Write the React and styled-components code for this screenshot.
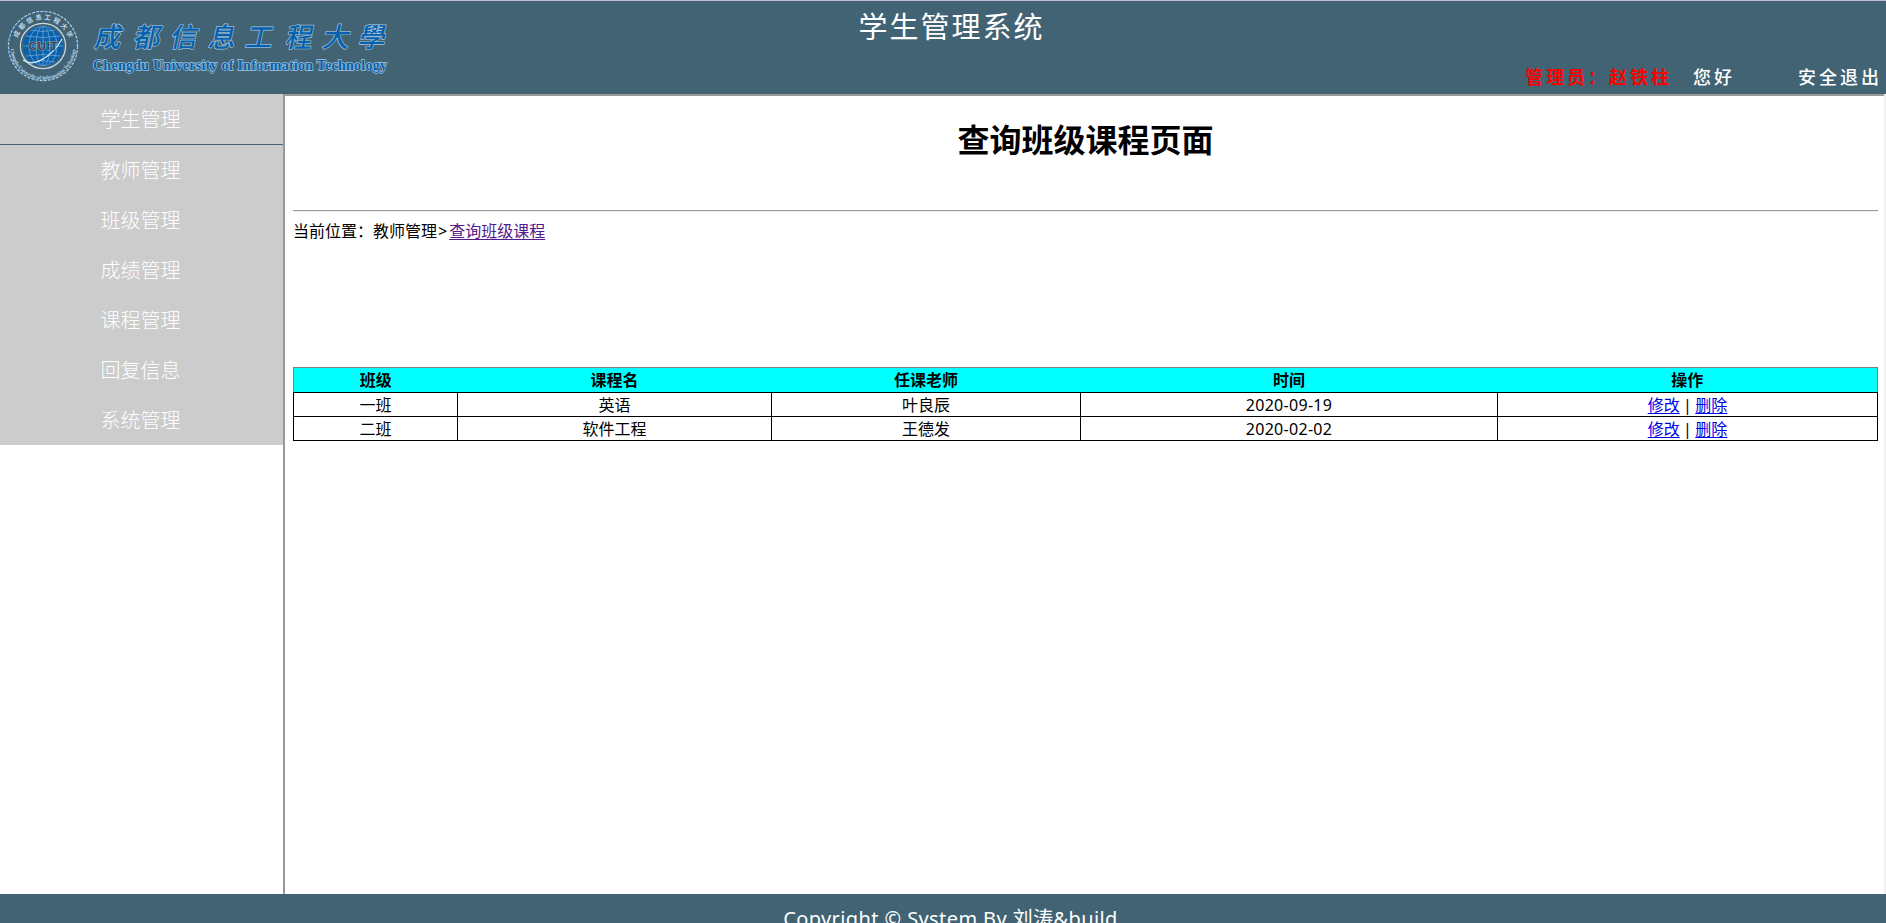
import React from 'react';
import styled, { createGlobalStyle } from 'styled-components';

const Global = createGlobalStyle`
  *, *::before, *::after { box-sizing: border-box; }
  body {
    margin: 0;
    background: #fff;
    font-family: "Noto Sans", "Noto Sans CJK SC", sans-serif;
    overflow: hidden;
  }
`;

const Page = styled.div`
  display: flex;
  flex-direction: column;
  height: 923px;
  overflow: hidden;
`;

const Header = styled.header`
  display: grid;
  grid-template-columns: 390px 1fr 390px;
  flex: none;
  height: 94px;
  border-top: 1px solid #c3bed3;
  background: #426374;
  color: #fff;
`;

const Logo = styled.svg`
  display: block;
  width: 390px;
  height: 93px;
`;

const SystemTitle = styled.div`
  padding: 5px 0 0 17px;
  text-align: center;
  font-size: 29px;
  line-height: 42px;
  letter-spacing: 2px;
  white-space: nowrap;
`;

const UserBar = styled.div`
  display: flex;
  align-items: flex-end;
  justify-content: flex-end;
  padding: 0 4px 3px 0;
  font-size: 18px;
  font-weight: 500;
  line-height: 28px;
  letter-spacing: 3px;
  white-space: nowrap;
`;

const Admin = styled.span`
  margin-right: 21px;
  color: #f00;
  font-weight: 700;
`;

const Greeting = styled.span`
  margin-right: 63px;
`;

const Body = styled.div`
  display: flex;
  flex: none;
  height: 800px;
`;

const Sidebar = styled.nav`
  flex: none;
  width: 283px;
`;

const MenuItem = styled.div`
  height: ${(p) => (p.$divided ? 51 : 50)}px;
  border-bottom: ${(p) => (p.$divided ? '1px solid #426374' : 'none')};
  background: #ccc;
  color: #fff;
  font-size: 20px;
  font-weight: 300;
  line-height: 52px;
  text-align: center;
  padding-right: 2px;
`;

const Frame = styled.main`
  flex: 1;
  border-top: 2px solid #999;
  border-left: 2px solid #999;
  padding: 0 6px 0 8px;
`;

const ScrollTrack = styled.div`
  flex: none;
  width: 2px;
  background: #f0f0f0;
`;

const Heading = styled.h1`
  margin: 20px 0 0;
  font-size: 32px;
  line-height: 48px;
  text-align: center;
`;

const Rule = styled.hr`
  height: 2px;
  margin: 46px 0 7px;
  border: 0;
  border-top: 1px solid #9a9a9a;
  border-bottom: 1px solid #eee;
`;

const Crumbs = styled.div`
  height: 148px;
  font-size: 16px;
  line-height: 24px;
`;

const Separator = styled.span`
  padding: 0 2px 0 1px;
`;

const Link = styled.a`
  color: ${(p) => (p.$visited ? '#551a8b' : '#0000ee')};
  text-decoration: underline;
  text-underline-offset: 2px;
  text-decoration-thickness: 1px;
`;

const Table = styled.table`
  width: 1585px;
  table-layout: fixed;
  border-collapse: collapse;
  border: 1px solid #808080;
  font-size: 16px;
  line-height: 20px;
  text-align: center;
`;

const HeadRow = styled.tr`
  height: 25px;
  background: #0ff;
`;

const HeadCell = styled.th`
  padding: 0;
`;

const Row = styled.tr`
  height: 24px;
`;

const Cell = styled.td`
  padding: 0;
  border: 1px solid #000;
  letter-spacing: ${(p) => (p.$spaced ? '0.3px' : 'normal')};
  word-spacing: -0.8px;
`;

const Footer = styled.footer`
  flex: none;
  height: 29px;
  padding: 10px 0 0 15px;
  background: #426374;
  color: #fff;
  font-size: 20px;
  line-height: 30px;
  letter-spacing: 0.4px;
  text-align: center;
`;

const MENU = ['学生管理', '教师管理', '班级管理', '成绩管理', '课程管理', '回复信息', '系统管理'];
const WIDTHS = [164, 314, 309, 417, 380];
const COLUMNS = ['班级', '课程名', '任课老师', '时间', '操作'];
const ROWS = [
  ['一班', '英语', '叶良辰', '2020-09-19'],
  ['二班', '软件工程', '王德发', '2020-02-02'],
];
const BRUSH = [
  ['成', 107], ['都', 146], ['信', 183], ['息', 221],
  ['工', 258], ['程', 298], ['大', 335], ['學', 371],
];

function UniversityLogo() {
  return (
    <Logo viewBox="0 1 390 93">
      <defs>
        <path id="arcTop" d="M16.5 46 A26.5 26.5 0 0 1 69.5 46" />
        <path id="arcBottom" d="M10.5 47 A32.5 32.5 0 0 0 75.5 47" />
        <clipPath id="globe"><circle cx="43" cy="46" r="20" /></clipPath>
      </defs>
      <circle cx="43" cy="46" r="34.5" fill="none" stroke="#b4d1e5" strokeWidth="1.3" strokeDasharray="3 1.2" />
      <circle cx="43" cy="46" r="33.7" fill="none" stroke="#1766a9" strokeWidth=".7" strokeDasharray="2 2" />
      <circle cx="43" cy="46" r="22.6" fill="none" stroke="#c7dcea" strokeWidth="1.2" />
      <circle cx="43" cy="46" r="20" fill="#0861ad" />
      <g clipPath="url(#globe)" fill="none" stroke="#70a5d2" strokeWidth=".8">
        <ellipse cx="43" cy="46" rx="7" ry="20" />
        <ellipse cx="43" cy="46" rx="14" ry="20" />
        <path d="M43 26V66M23 46H63M26 36Q43 39 60 36M26 56Q43 53 60 56M31 30Q43 33 55 30M31 62Q43 59 55 62" />
      </g>
      <path d="M23 60Q31 66 43 59T62 39" fill="none" stroke="#dbeaf5" strokeWidth="1.2" />
      <text x="43" y="50" textAnchor="middle" textLength="29" fontFamily="Liberation Sans" fontWeight="700" fontSize="11.5" fill="#39424c" stroke="#a3a9ad" strokeWidth="1" paintOrder="stroke">CUIT</text>
      <text fontFamily="Noto Sans CJK SC" fontWeight="700" fontSize="6.5" fill="#b9d6ea">
        <textPath href="#arcTop" startOffset="8" textLength="67">成都信息工程大学</textPath>
      </text>
      <text fontFamily="Liberation Serif" fontWeight="700" fontSize="5.2" fill="#b9d6ea">
        <textPath href="#arcBottom" startOffset="2" textLength="98">Chengdu University of Information Technology</textPath>
      </text>
      <g fill="#0860ad" stroke="#a5c8df" strokeWidth="1.3" paintOrder="stroke" strokeLinejoin="round">
        {BRUSH.map(([ch, x]) => (
          <text key={ch} transform={`translate(${x} 47) skewX(-12)`} textAnchor="middle" fontFamily="Noto Sans CJK TC" fontWeight="500" fontSize="27">{ch}</text>
        ))}
        <text x="93" y="70" textLength="294" fontFamily="Liberation Serif" fontWeight="700" fontSize="14">Chengdu University of Information Technology</text>
      </g>
    </Logo>
  );
}

export default function App() {
  return (
    <Page>
      <Global />
      <Header>
        <UniversityLogo />
        <SystemTitle>学生管理系统</SystemTitle>
        <UserBar>
          <Admin>管理员：赵铁柱</Admin>
          <Greeting>您好</Greeting>
          <span>安全退出</span>
        </UserBar>
      </Header>
      <Body>
        <Sidebar>
          {MENU.map((name, i) => <MenuItem key={name} $divided={i === 0}>{name}</MenuItem>)}
        </Sidebar>
        <Frame>
          <Heading>查询班级课程页面</Heading>
          <Rule />
          <Crumbs>当前位置：教师管理<Separator>&gt;</Separator><Link $visited>查询班级课程</Link></Crumbs>
          <Table>
            <colgroup>{WIDTHS.map((w, i) => <col key={i} style={{ width: w }} />)}</colgroup>
            <thead>
              <HeadRow>{COLUMNS.map((c) => <HeadCell key={c}>{c}</HeadCell>)}</HeadRow>
            </thead>
            <tbody>
              {ROWS.map((row) => (
                <Row key={row[0]}>
                  {row.map((value, i) => <Cell key={value} $spaced={i === 3}>{value}</Cell>)}
                  <Cell><Link>修改</Link> | <Link>删除</Link></Cell>
                </Row>
              ))}
            </tbody>
          </Table>
        </Frame>
        <ScrollTrack />
      </Body>
      <Footer>Copyright © System By 刘涛&amp;build</Footer>
    </Page>
  );
}
